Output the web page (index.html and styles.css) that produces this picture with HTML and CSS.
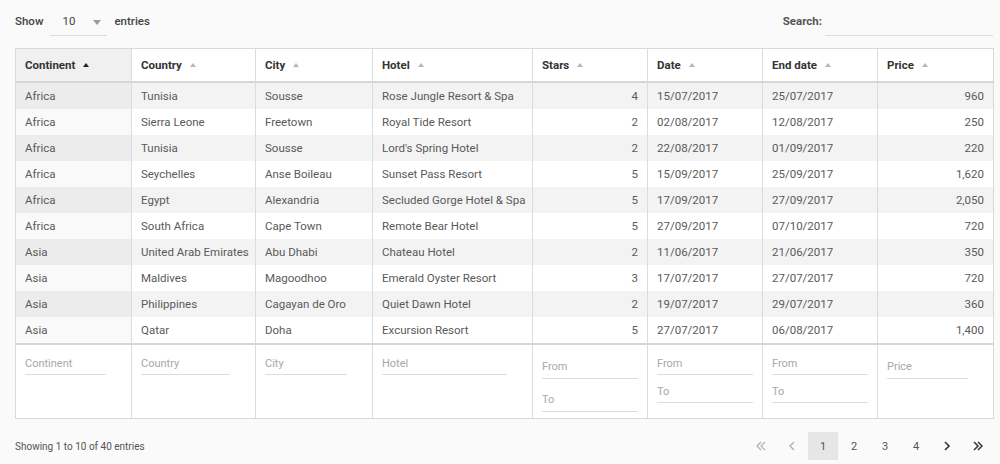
FILE: index.html
```html
<!DOCTYPE html>
<html lang="en">
<head>
<meta charset="utf-8">
<title>Hotels</title>
<link rel="stylesheet" href="styles.css">
</head>
<body>
<div class="page">
  <div class="toolbar">
    <div class="length">
      <span class="lbl">Show</span>
      <span class="select"><span class="select-val">10</span><svg class="caret" width="8" height="5" viewBox="0 0 8 5"><polygon points="0,0 8,0 4,5" fill="#9a9a9a"/></svg></span>
      <span class="lbl">entries</span>
    </div>
    <div class="search">
      <span class="lbl bold">Search:</span>
      <input class="search-input" type="text" aria-label="Search">
    </div>
  </div>

  <table class="grid">
    <colgroup>
      <col class="w115"><col class="w124"><col class="w117"><col class="w160"><col class="w115"><col class="w115"><col class="w115"><col class="w116">
    </colgroup>
    <thead>
      <tr>
        <th class="sorted active">Continent</th>
        <th>Country</th>
        <th>City</th>
        <th>Hotel</th>
        <th>Stars</th>
        <th>Date</th>
        <th>End date</th>
        <th>Price</th>
      </tr>
    </thead>
    <tbody>
      <tr><td class="s">Africa</td><td>Tunisia</td><td>Sousse</td><td>Rose Jungle Resort &amp; Spa</td><td class="r">4</td><td>15/07/2017</td><td>25/07/2017</td><td class="r">960</td></tr>
      <tr><td class="s">Africa</td><td>Sierra Leone</td><td>Freetown</td><td>Royal Tide Resort</td><td class="r">2</td><td>02/08/2017</td><td>12/08/2017</td><td class="r">250</td></tr>
      <tr><td class="s">Africa</td><td>Tunisia</td><td>Sousse</td><td>Lord's Spring Hotel</td><td class="r">2</td><td>22/08/2017</td><td>01/09/2017</td><td class="r">220</td></tr>
      <tr><td class="s">Africa</td><td>Seychelles</td><td>Anse Boileau</td><td>Sunset Pass Resort</td><td class="r">5</td><td>15/09/2017</td><td>25/09/2017</td><td class="r">1,620</td></tr>
      <tr><td class="s">Africa</td><td>Egypt</td><td>Alexandria</td><td>Secluded Gorge Hotel &amp; Spa</td><td class="r">5</td><td>17/09/2017</td><td>27/09/2017</td><td class="r">2,050</td></tr>
      <tr><td class="s">Africa</td><td>South Africa</td><td>Cape Town</td><td>Remote Bear Hotel</td><td class="r">5</td><td>27/09/2017</td><td>07/10/2017</td><td class="r">720</td></tr>
      <tr><td class="s">Asia</td><td>United Arab Emirates</td><td>Abu Dhabi</td><td>Chateau Hotel</td><td class="r">2</td><td>11/06/2017</td><td>21/06/2017</td><td class="r">350</td></tr>
      <tr><td class="s">Asia</td><td>Maldives</td><td>Magoodhoo</td><td>Emerald Oyster Resort</td><td class="r">3</td><td>17/07/2017</td><td>27/07/2017</td><td class="r">720</td></tr>
      <tr><td class="s">Asia</td><td>Philippines</td><td>Cagayan de Oro</td><td>Quiet Dawn Hotel</td><td class="r">2</td><td>19/07/2017</td><td>29/07/2017</td><td class="r">360</td></tr>
      <tr><td class="s">Asia</td><td>Qatar</td><td>Doha</td><td>Excursion Resort</td><td class="r">5</td><td>27/07/2017</td><td>06/08/2017</td><td class="r">1,400</td></tr>
    </tbody>
    <tfoot>
      <tr>
        <td><div class="filter"><input class="fi text" placeholder="Continent"></div></td>
        <td><div class="filter"><input class="fi text" placeholder="Country"></div></td>
        <td><div class="filter"><input class="fi text" placeholder="City"></div></td>
        <td><div class="filter"><input class="fi text" placeholder="Hotel"></div></td>
        <td><div class="filter range num"><input class="fi tall" placeholder="From"><input class="fi tall" placeholder="To"></div></td>
        <td><div class="filter range date"><input class="fi" placeholder="From"><input class="fi" placeholder="To"></div></td>
        <td><div class="filter range date"><input class="fi" placeholder="From"><input class="fi" placeholder="To"></div></td>
        <td><div class="filter num"><input class="fi tall text" placeholder="Price"></div></td>
      </tr>
    </tfoot>
  </table>

  <div class="footer">
    <div class="info">Showing 1 to 10 of 40 entries</div>
    <div class="pager">
      <span class="pg disabled"><svg width="10" height="10" viewBox="0 0 10 10"><polyline points="5,1 1,5 5,9" fill="none" stroke="currentColor" stroke-width="1.2"/><polyline points="9,1 5,5 9,9" fill="none" stroke="currentColor" stroke-width="1.2"/></svg></span>
      <span class="pg disabled"><svg width="10" height="10" viewBox="0 0 10 10"><polyline points="7,1 3,5 7,9" fill="none" stroke="currentColor" stroke-width="1.4"/></svg></span>
      <span class="pg current">1</span>
      <span class="pg">2</span>
      <span class="pg">3</span>
      <span class="pg">4</span>
      <span class="pg icon"><svg width="10" height="10" viewBox="0 0 10 10"><polyline points="3,1 7,5 3,9" fill="none" stroke="currentColor" stroke-width="1.6"/></svg></span>
      <span class="pg icon"><svg width="10" height="10" viewBox="0 0 10 10"><polyline points="1,1 5,5 1,9" fill="none" stroke="currentColor" stroke-width="1.5"/><polyline points="5,1 9,5 5,9" fill="none" stroke="currentColor" stroke-width="1.5"/></svg></span>
    </div>
  </div>
</div>
</body>
</html>
```

FILE: styles.css
```css
html, body {
  margin: 0;
  padding: 0;
  background: #fafafa;
}

body {
  font-family: Roboto, "Liberation Sans", Arial, sans-serif;
  font-size: 11.5px;
  color: #555;
}

.page {
  width: 978px;
  padding: 7px 7px 0 15px;
}

.toolbar {
  display: flex;
  justify-content: space-between;
  align-items: flex-start;
  height: 29px;
  margin-bottom: 12px;
}

.length, .search {
  display: flex;
  align-items: flex-start;
}

.lbl {
  line-height: 28px;
  color: #444;
  font-weight: 500;
}

.lbl.bold {
  font-weight: 700;
  color: #555;
}

.select {
  display: flex;
  align-items: center;
  justify-content: space-between;
  box-sizing: border-box;
  width: 57px;
  height: 29px;
  margin: 0 7px 0 7px;
  padding: 0 4px 0 12px;
  border-bottom: 1px solid #ddd;
  color: #444;
}

.select-val {
  line-height: 28px;
}

.caret {
  margin-top: 2px;
  margin-right: 2px;
}

.search-input {
  box-sizing: border-box;
  width: 168px;
  height: 29px;
  margin-left: 3px;
  padding: 0;
  border: none;
  border-bottom: 1px solid #ddd;
  background: transparent;
  outline: none;
}

.grid {
  width: 978px;
  table-layout: fixed;
  border-collapse: separate;
  border-spacing: 0;
  border: 1px solid #d9d9d9;
  background: #fff;
}

.w115 { width: 115px; }
.w116 { width: 116px; }
.w117 { width: 117px; }
.w124 { width: 124px; }
.w160 { width: 160px; }

.grid th,
.grid td {
  padding: 0 9px;
  border-left: 1px solid #dcdcdc;
  text-align: left;
  white-space: nowrap;
  overflow: hidden;
}

.grid th:first-child,
.grid td:first-child {
  border-left: none;
}

.grid th {
  line-height: 32px;
  font-weight: 700;
  color: #333;
  background: #fff;
  border-bottom: 2px solid #d6d6d6;
}

.grid th::after {
  content: "";
  display: inline-block;
  margin-left: 8px;
  vertical-align: 2px;
  border-left: 3.5px solid transparent;
  border-right: 3.5px solid transparent;
  border-bottom: 4px solid #b8b8b8;
}

.grid th.active::after {
  border-bottom-color: #222;
}

.grid th.sorted {
  background: #f0f0f0;
}

.grid tbody td {
  line-height: 26px;
  color: #5a5a5a;
}

.grid tbody tr:nth-child(odd) td {
  background: #f3f3f3;
}

.grid tbody tr:nth-child(odd) td.s {
  background: #ececec;
}

.grid tbody tr:nth-child(even) td.s {
  background: #f9f9f9;
}

.grid td.r {
  text-align: right;
}

.grid tfoot td {
  vertical-align: top;
  border-top: 2px solid #d6d6d6;
  background: #fff;
  padding: 0 9px;
}

.filter {
  box-sizing: border-box;
  height: 73px;
  padding-top: 8px;
  display: flex;
  flex-direction: column;
}

.filter.num {
  padding-top: 10px;
}

.filter.range.num {
  gap: 9px;
}

.filter.range.date {
  gap: 6px;
}

.fi {
  display: block;
  box-sizing: border-box;
  width: 100%;
  height: 22px;
  padding: 0;
  border: none;
  border-bottom: 1px solid #dcdcdc;
  background: transparent;
  outline: none;
  font-family: Roboto, "Liberation Sans", Arial, sans-serif;
  font-size: 11px;
  color: #555;
}

.fi.tall {
  height: 24px;
}

.fi.text {
  width: calc(100% - 16px);
}

.fi::placeholder {
  color: #a8a8a8;
}

.footer {
  display: flex;
  justify-content: space-between;
  align-items: center;
  margin-top: 13px;
  height: 28px;
}

.info {
  font-size: 10px;
  color: #555;
}

.pager {
  display: flex;
  gap: 1px;
}

.pg {
  display: flex;
  align-items: center;
  justify-content: center;
  width: 30px;
  height: 28px;
  font-size: 11px;
  color: #555;
}

.pg.current {
  background: #e6e6e6;
}

.pg.disabled {
  color: #b0b0b0;
}

.pg.icon {
  color: #333;
}
```
